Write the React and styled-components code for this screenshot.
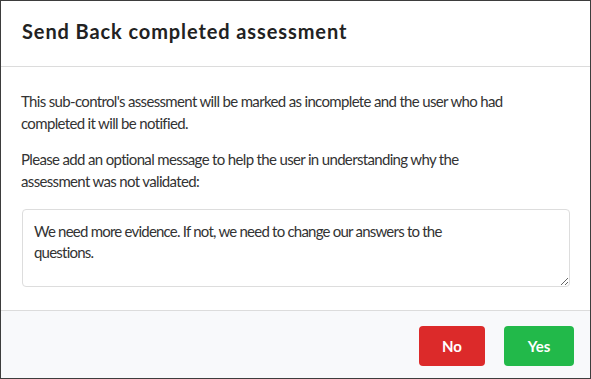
import styled, { createGlobalStyle } from 'styled-components'

const GlobalStyle = createGlobalStyle`
  html, body {
    margin: 0;
    padding: 0;
    background: #ffffff;
  }
  * {
    box-sizing: border-box;
  }
`

function App() {
  return (
    <>
      <GlobalStyle />
      <Modal>
        <Header>
          <Title>Send Back completed assessment</Title>
        </Header>
        <Body>
          <Text>
            This sub-control's assessment will be marked as incomplete and the user who had
            completed it will be notified.
          </Text>
          <Text>
            Please add an optional message to help the user in understanding why the
            assessment was not validated:
          </Text>
          <Message
            defaultValue="We need more evidence. If not, we need to change our answers to the questions."
          />
        </Body>
        <Footer>
          <Button color="#dc2a2a">No</Button>
          <Button color="#22b94a" wide>Yes</Button>
        </Footer>
      </Modal>
    </>
  )
}

const Modal = styled.div`
  width: 591px;
  height: 379px;
  border: 1px solid #3d3d3d;
  background: #ffffff;
  display: flex;
  flex-direction: column;
  font-family: Lato, "Liberation Sans", sans-serif;
  color: #333333;
`

const Header = styled.div`
  height: 66px;
  padding: 0 21px 6px;
  display: flex;
  align-items: center;
  border-bottom: 1px solid #dcdcdc;
`

const Title = styled.h2`
  margin: 0;
  font-size: 20px;
  font-weight: 700;
  letter-spacing: 0.9px;
  color: #222222;
`

const Body = styled.div`
  padding: 23px 21px 23px 20px;
  display: flex;
  flex-direction: column;
  border-bottom: 1px solid #dcdcdc;
`

const Text = styled.p`
  margin: 0 0 14px;
  max-width: 500px;
  font-size: 15px;
  line-height: 22px;
  letter-spacing: -0.66px;
  &:nth-of-type(2) {
    margin-bottom: 17px;
  }
`

const Message = styled.textarea`
  display: block;
  width: 548px;
  margin-left: 1px;
  height: 78px;
  padding: 11px 90px 11px 11px;
  border: 1px solid #dddddd;
  border-radius: 4px;
  font-family: Lato, "Liberation Sans", sans-serif;
  font-size: 15px;
  line-height: 21px;
  letter-spacing: -0.78px;
  color: #333333;
  resize: vertical;
  outline: none;
`

const Footer = styled.div`
  flex: 1;
  background: #f8f9fb;
  display: flex;
  justify-content: flex-end;
  align-items: flex-start;
  gap: 19px;
  padding: 15px 16px 0 0;
`

const Button = styled.button`
  width: ${p => (p.wide ? '70px' : '66px')};
  height: 40px;
  border: none;
  border-radius: 4px;
  background: ${p => p.color};
  color: #ffffff;
  font-family: Lato, "Liberation Sans", sans-serif;
  font-size: 15px;
  font-weight: 700;
  cursor: pointer;
`

export default App
